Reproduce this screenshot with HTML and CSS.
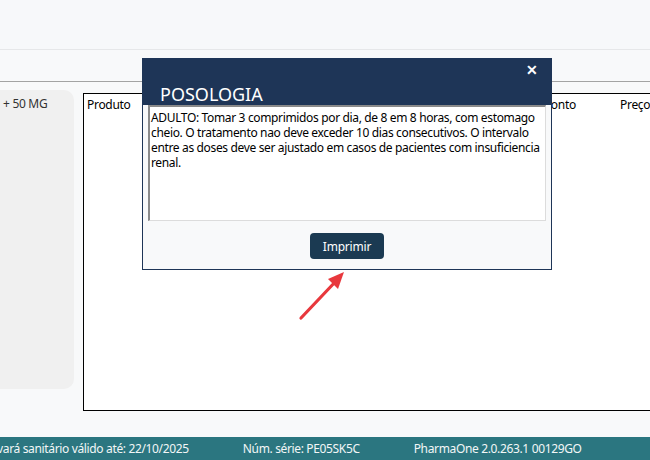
FILE: index.html
```html
<!DOCTYPE html>
<html lang="pt-BR">
<head>
    <meta charset="UTF-8">
    <meta name="viewport" content="width=device-width, initial-scale=1.0">
    <title>PharmaOne - Posologia</title>
    <link rel="stylesheet" href="styles.css">
</head>
<body>
    <div class="app">
        <div class="top-bar"></div>
        <div class="tool-bar"></div>

        <div class="content">
            <div class="side-panel">
                <span class="side-text">+ 50 MG</span>
            </div>

            <div class="grid-box">
                <div class="grid-head">
                    <span class="col col-produto">Produto</span>
                    <span class="col col-desconto">Desconto</span>
                    <span class="col col-preco">Preço</span>
                </div>
            </div>
        </div>

        <div class="status-bar">
            <span class="status-item status-first">Alvará sanitário válido até: 22/10/2025</span>
            <span class="status-item">Núm. série: PE05SK5C</span>
            <span class="status-item">PharmaOne 2.0.263.1 00129GO</span>
        </div>
    </div>

    <!-- Modal Posologia -->
    <div class="modal">
        <div class="modal-header">
            <span class="modal-title">POSOLOGIA</span>
            <span class="modal-close">&#x2715;</span>
        </div>
        <div class="modal-body">
            <div class="posologia-text">ADULTO: Tomar 3 comprimidos por dia, de 8 em 8 horas, com estomago cheio. O tratamento nao deve exceder 10 dias consecutivos. O intervalo entre as doses deve ser ajustado em casos de pacientes com insuficiencia renal.</div>
            <div class="modal-actions">
                <button class="btn-imprimir">Imprimir</button>
            </div>
        </div>
    </div>

    <!-- seta de destaque -->
    <svg class="arrow" width="60" height="60" viewBox="0 0 60 60">
        <line x1="8" y1="55" x2="44" y2="17" stroke="#e8383d" stroke-width="3.2" stroke-linecap="round"/>
        <polygon points="51,9 35,16 45,26" fill="#e8383d"/>
    </svg>
</body>
</html>
```

FILE: styles.css
```css
:root {
    --navy: #1e3557;
    --btn-navy: #1b3a52;
    --teal: #2b7680;
    --page-bg: #f8f9fa;
}

* {
    margin: 0;
    padding: 0;
    box-sizing: border-box;
}

body {
    width: 650px;
    height: 460px;
    overflow: hidden;
    background: var(--page-bg);
    font-family: 'Noto Sans', 'Open Sans', sans-serif;
    font-size: 12px;
    color: #000;
    position: relative;
}

.app {
    display: flex;
    flex-direction: column;
    height: 100%;
}

.top-bar {
    height: 50px;
    border-bottom: 1px solid #e6e7e9;
    background: #f7f8fa;
}

.tool-bar {
    height: 32px;
    border-bottom: 1px solid #a3a3a3;
}

.content {
    flex: 1;
    display: flex;
    align-items: flex-start;
    overflow: hidden;
}

.side-panel {
    margin-top: 8px;
    margin-left: -20px;
    width: 94px;
    height: 299px;
    flex-shrink: 0;
    background: #f0f0f0;
    border-radius: 10px;
    padding: 5px 0 0 23px;
}

.side-text {
    font-size: 12px;
    letter-spacing: -0.3px;
    color: #333;
}

.grid-box {
    margin-top: 11px;
    margin-left: 9px;
    width: 620px;
    height: 318px;
    flex-shrink: 0;
    background: #fff;
    border: 1px solid #000;
}

.grid-head {
    display: flex;
    padding: 2px 0 0 3px;
    font-size: 12px;
    letter-spacing: -0.3px;
}

.col-produto {
    width: 438px;
}

.col-desconto {
    width: 95px;
}

.status-bar {
    height: 23px;
    flex-shrink: 0;
    background: var(--teal);
    color: #f2f6f7;
    display: flex;
    align-items: center;
    gap: 54px;
    font-size: 12px;
    letter-spacing: -0.35px;
    white-space: nowrap;
}

.status-first {
    margin-left: -13px;
}

/* modal */
.modal {
    position: absolute;
    left: 142px;
    top: 58px;
    width: 410px;
    height: 212px;
    border: 1px solid var(--navy);
    background: var(--page-bg);
}

.modal-header {
    height: 46px;
    background: var(--navy);
    position: relative;
}

.modal-title {
    position: absolute;
    left: 17px;
    bottom: -1px;
    color: #fff;
    font-size: 18px;
}

.modal-close {
    position: absolute;
    right: 13px;
    top: 1px;
    color: #fff;
    font-size: 14px;
    font-weight: bold;
}

.modal-body {
    padding: 0 5px;
}

.posologia-text {
    height: 116px;
    background: #fff;
    border-top: 2px solid #8a8a8a;
    border-left: 2px solid #8a8a8a;
    border-right: 1px solid #dcdcdc;
    border-bottom: 1px solid #dcdcdc;
    padding: 3px 1px 1px;
    font-size: 12px;
    letter-spacing: -0.35px;
    line-height: 15px;
}

.modal-actions {
    display: flex;
    justify-content: center;
    padding-top: 12px;
}

.btn-imprimir {
    width: 74px;
    height: 26px;
    border: none;
    border-radius: 4px;
    background: var(--btn-navy);
    color: #fff;
    font-family: 'Noto Sans', 'Open Sans', sans-serif;
    font-size: 12px;
    letter-spacing: -0.2px;
}

.arrow {
    position: absolute;
    left: 293px;
    top: 263px;
}
```
